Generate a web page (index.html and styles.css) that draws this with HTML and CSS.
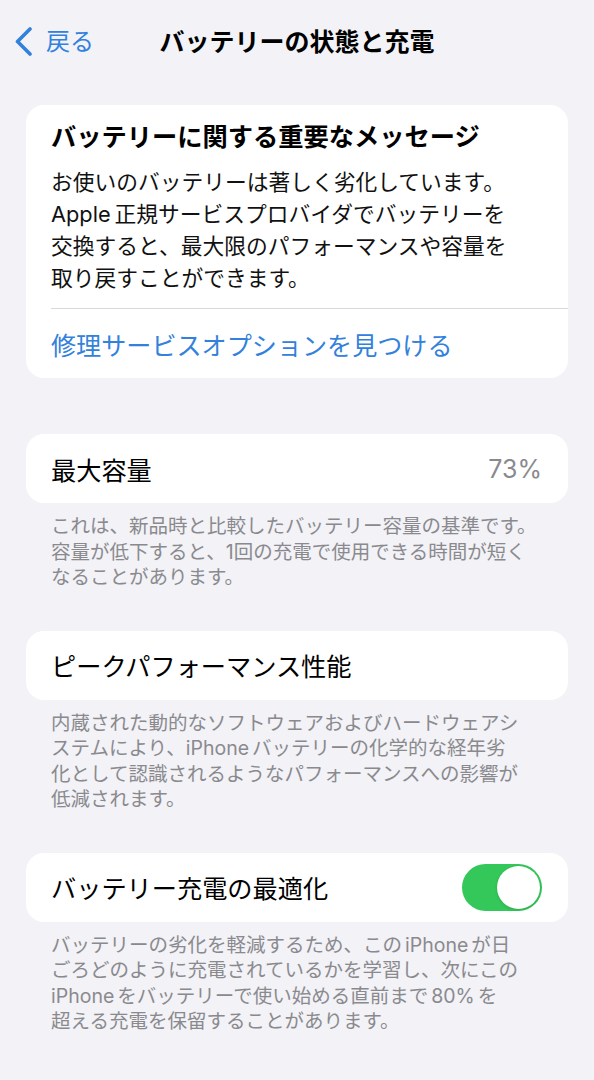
FILE: index.html
```html
<!DOCTYPE html>
<html lang="ja">
<head>
<meta charset="utf-8">
<title>バッテリーの状態と充電</title>
<link rel="stylesheet" href="styles.css">
</head>
<body>
<div class="screen">
  <header class="nav">
    <div class="back">
      <svg class="chev" width="20" height="30" viewBox="0 0 20 30"><path d="M16 2 L3.5 14.5 L16 27" fill="none" stroke="#3281dc" stroke-width="3.6" stroke-linecap="round" stroke-linejoin="round"/></svg>
      <span class="back-label">戻る</span>
    </div>
    <h1 class="title">バッテリーの状態と充電</h1>
    <div></div>
  </header>

  <section class="card message">
    <div class="message-body">
      <h2 class="message-title">バッテリーに関する重要なメッセージ</h2>
      <p class="message-text">お使いのバッテリーは著しく劣化しています。<br>Apple<span class="sp"></span>正規サービスプロバイダでバッテリーを<br>交換すると、最大限のパフォーマンスや容量を<br>取り戻すことができます。</p>
    </div>
    <div class="divider"></div>
    <div class="link-row">修理サービスオプションを見つける</div>
  </section>

  <section class="card cell first-cell">
    <span class="label">最大容量</span>
    <span class="value">73%</span>
  </section>
  <p class="footer">これは、新品時と比較したバッテリー容量の基準です。<br>容量が低下すると、1回の充電で使用できる時間が短く<br>なることがあります。</p>

  <section class="card cell">
    <span class="label">ピークパフォーマンス性能</span>
  </section>
  <p class="footer">内蔵された動的なソフトウェアおよびハードウェアシ<br>ステムにより、iPhone<span class="sp2"></span>バッテリーの化学的な経年劣<br>化として認識されるようなパフォーマンスへの影響が<br>低減されます。</p>

  <section class="card cell">
    <span class="label">バッテリー充電の最適化</span>
    <span class="switch"><span class="knob"></span></span>
  </section>
  <p class="footer">バッテリーの劣化を軽減するため、この<span class="sp2"></span>iPhone<span class="sp2"></span>が日<br>ごろどのように充電されているかを学習し、次にこの<br>iPhone<span class="sp2"></span>をバッテリーで使い始める直前まで<span class="sp2"></span>80%<span class="sp2"></span>を<br>超える充電を保留することがあります。</p>
</div>
</body>
</html>
```

FILE: styles.css
```css
* { box-sizing: border-box; }
html, body { margin: 0; padding: 0; }
body {
  background: #f2f2f7;
  font-family: "Inter", "Noto Sans CJK JP", sans-serif;
  color: #000;
  width: 594px;
}
.screen { display: flex; flex-direction: column; padding-bottom: 40px; }

.nav {
  height: 84px;
  display: grid;
  grid-template-columns: 1fr auto 1fr;
  align-items: center;
}
.back {
  display: flex;
  align-items: center;
  padding-left: 14px;
  gap: 12px;
  color: #3281dc;
}
.chev { display: block; }
.back-label { font-size: 24px; line-height: 30px; }
.title {
  margin: 0;
  font-size: 25px;
  font-weight: 700;
  line-height: 30px;
}

.card {
  background: #fff;
  margin: 0 26px;
  border-radius: 18px;
}
.message { margin-top: 21px; }
.message-body { padding: 16px 25px 14px; }
.message-title {
  margin: 0 0 13px;
  font-size: 25.25px;
  line-height: 32px;
  font-weight: 700;
}
.message-text {
  margin: 0;
  font-size: 21.75px;
  line-height: 32px;
  color: #111;
}
.sp { display: inline-block; width: 4px; }
.sp2 { display: inline-block; width: 3px; }
.divider { height: 1px; background: #d9d9dd; margin-left: 25px; }
.link-row {
  height: 69px;
  display: flex;
  align-items: center;
  padding: 0 25px;
  color: #3281dc;
  font-size: 25.1px;
}

.cell {
  height: 69px;
  display: flex;
  align-items: center;
  justify-content: space-between;
  padding: 0 26px 0 25px;
  font-size: 25.2px;
}
.first-cell { margin-top: 56px; }
.value { color: #8a8a8e; font-size: 25px; }

.switch {
  width: 80px;
  height: 47px;
  border-radius: 24px;
  background: #34c759;
  display: flex;
  align-items: center;
  justify-content: flex-end;
  padding: 2px;
}
.knob {
  width: 43px;
  height: 43px;
  border-radius: 50%;
  background: #fff;
  box-shadow: 0 1px 3px rgba(0,0,0,0.15);
}

.footer {
  margin: 0 0 40px;
  padding: 11px 25px 0 51px;
  color: #8a8a8e;
  font-size: 19.5px;
  line-height: 25.5px;
}
```
